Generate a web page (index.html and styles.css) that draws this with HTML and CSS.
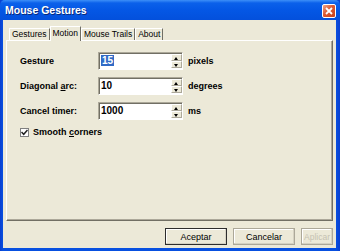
FILE: index.html
```html
<!DOCTYPE html>
<html lang="en">
<head>
  <meta charset="UTF-8" />
  <title>Mouse Gestures</title>
  <link rel="stylesheet" href="styles.css">
</head>
<body>
  <div class="window">
    <div class="titlebar">
      <span class="title">Mouse Gestures</span>
      <button class="close">
        <svg width="8" height="8" viewBox="0 0 8 8"><path d="M1 1L7 7M7 1L1 7" stroke="#fff" stroke-width="1.8"/></svg>
      </button>
    </div>
    <div class="client">
      <div class="tabs">
        <div class="tab">Gestures</div>
        <div class="tab active">Motion</div>
        <div class="tab">Mouse Trails</div>
        <div class="tab">About</div>
      </div>
      <div class="panel">
        <div class="row">
          <label class="label">Gesture</label>
          <div class="spin">
            <span class="value"><span class="sel">15</span></span>
            <span class="arrows"><span class="up"></span><span class="down"></span></span>
          </div>
          <span class="unit">pixels</span>
        </div>
        <div class="row">
          <label class="label">Diagonal <u>a</u>rc:</label>
          <div class="spin">
            <span class="value">10</span>
            <span class="arrows"><span class="up"></span><span class="down"></span></span>
          </div>
          <span class="unit">degrees</span>
        </div>
        <div class="row">
          <label class="label">Cancel timer:</label>
          <div class="spin">
            <span class="value">1000</span>
            <span class="arrows"><span class="up"></span><span class="down"></span></span>
          </div>
          <span class="unit">ms</span>
        </div>
        <div class="check">
          <span class="box">
            <svg width="7" height="7" viewBox="0 0 7 7"><path d="M0.5 3L2.7 5.3L6.5 1" stroke="#222" stroke-width="1.5" fill="none"/></svg>
          </span>
          <span class="label">Smooth <u>c</u>orners</span>
        </div>
      </div>
      <div class="buttons">
        <button class="btn default">Aceptar</button>
        <button class="btn">Cancelar</button>
        <button class="btn disabled">Aplicar</button>
      </div>
    </div>
  </div>
</body>
</html>
```

FILE: styles.css
```css
body {
  margin: 0;
  font-family: "Liberation Sans", Arial, sans-serif;
  font-size: 9px;
  color: #000;
}
.window {
  width: 340px;
  height: 251px;
  background: linear-gradient(90deg, #0a3fd0, #0850e0 3px, #0850e0 336px, #0a3fd0);
  display: flex;
  flex-direction: column;
  box-sizing: border-box;
  padding: 0 4px 3px 3px;
}
.titlebar {
  height: 20px;
  flex: none;
  margin: 0 -4px 0 -3px;
  background: linear-gradient(#3d8ff8 0, #0b61ea 3px, #0457e5 10px, #0350dc 100%);
  display: flex;
  align-items: center;
  justify-content: space-between;
  padding: 0 4px 0 5px;
  border-radius: 5px 5px 0 0;
}
.title {
  color: #fff;
  font-weight: bold;
  font-size: 10.5px;
  text-shadow: 1px 1px #0a2a7a;
}
.close {
  width: 14px;
  height: 14px;
  padding: 0;
  margin-top: 2px;
  border: 1px solid #fff;
  border-radius: 2px;
  background: linear-gradient(135deg, #eea58a, #dc5a33 45%, #c8421a);
  display: flex;
  align-items: center;
  justify-content: center;
}
.client {
  flex: 1;
  background: #ece9d8;
  display: flex;
  flex-direction: column;
  padding: 6px 3px 0 3px;
}
.tabs {
  display: flex;
  padding-left: 3px;
  height: 14px;
  align-items: flex-end;
  position: relative;
  z-index: 1;
  font-size: 8.5px;
}
.tab {
  height: 12px;
  line-height: 11px;
  padding: 0 2px;
  border-top: 1px solid #fff;
  border-left: 1px solid #fff;
  border-right: 1px solid #716f64;
  box-sizing: border-box;
  white-space: nowrap;
}
.tab.active {
  height: 15px;
  line-height: 13px;
  margin-bottom: -1px;
  background: #ece9d8;
}
.panel {
  height: 181px;
  flex: none;
  border-top: 1px solid #fff;
  border-left: 1px solid #fff;
  border-right: 1px solid #716f64;
  border-bottom: 1px solid #716f64;
  box-shadow: inset -1px -1px #aca899;
  box-sizing: border-box;
  padding: 11px 0 0 13px;
  display: flex;
  flex-direction: column;
  gap: 7px;
}
.row {
  display: flex;
  align-items: center;
  height: 18px;
}
.label {
  width: 78px;
  font-weight: bold;
  white-space: nowrap;
}
.spin {
  width: 85px;
  height: 18px;
  box-sizing: border-box;
  display: flex;
  background: #fff;
  border-top: 1px solid #aca899;
  border-left: 1px solid #aca899;
  border-right: 1px solid #fff;
  border-bottom: 1px solid #fff;
  box-shadow: inset 1px 1px #716f64;
}
.value {
  flex: 1;
  padding: 2px 0 0 2px;
  font-weight: bold;
  font-size: 10px;
  line-height: 12px;
}
.sel {
  background: #316ac5;
  color: #fff;
  padding: 0 1px;
}
.arrows {
  width: 11px;
  display: flex;
  flex-direction: column;
  margin: 1px 0 1px 0;
}
.arrows span {
  flex: 1;
  background: #ece9d8;
  border-top: 1px solid #fff;
  border-left: 1px solid #fff;
  border-right: 1px solid #aca899;
  border-bottom: 1px solid #aca899;
  position: relative;
}
.arrows .up::after,
.arrows .down::after {
  content: "";
  position: absolute;
  left: 2px;
  top: 2px;
  border-left: 2.5px solid transparent;
  border-right: 2.5px solid transparent;
}
.arrows .up::after {
  border-bottom: 3px solid #000;
}
.arrows .down::after {
  border-top: 3px solid #000;
}
.unit {
  margin-left: 5px;
  font-weight: bold;
}
.check {
  display: flex;
  align-items: center;
  gap: 4px;
  height: 10px;
}
.check .label {
  width: auto;
}
.box {
  width: 9px;
  height: 9px;
  box-sizing: border-box;
  background: #fff;
  border: 1px solid #808080;
  display: flex;
  align-items: center;
  justify-content: center;
}
.buttons {
  display: flex;
  justify-content: flex-end;
  gap: 6px;
  padding: 7px 0 0 0;
}
.btn {
  width: 62px;
  height: 17px;
  font-family: "Liberation Sans", Arial, sans-serif;
  font-size: 9px;
  background: #ece9d8;
  border: 1px solid #aca899;
  box-shadow: inset -1px -1px #d6d2c2, inset 1px 1px #fff;
  padding: 0;
}
.btn.default {
  border-color: #2d2d2d;
}
.btn.disabled {
  width: 32px;
  font-size: 8.5px;
  color: #c5c2b2;
  overflow: hidden;
  white-space: nowrap;
}
```
